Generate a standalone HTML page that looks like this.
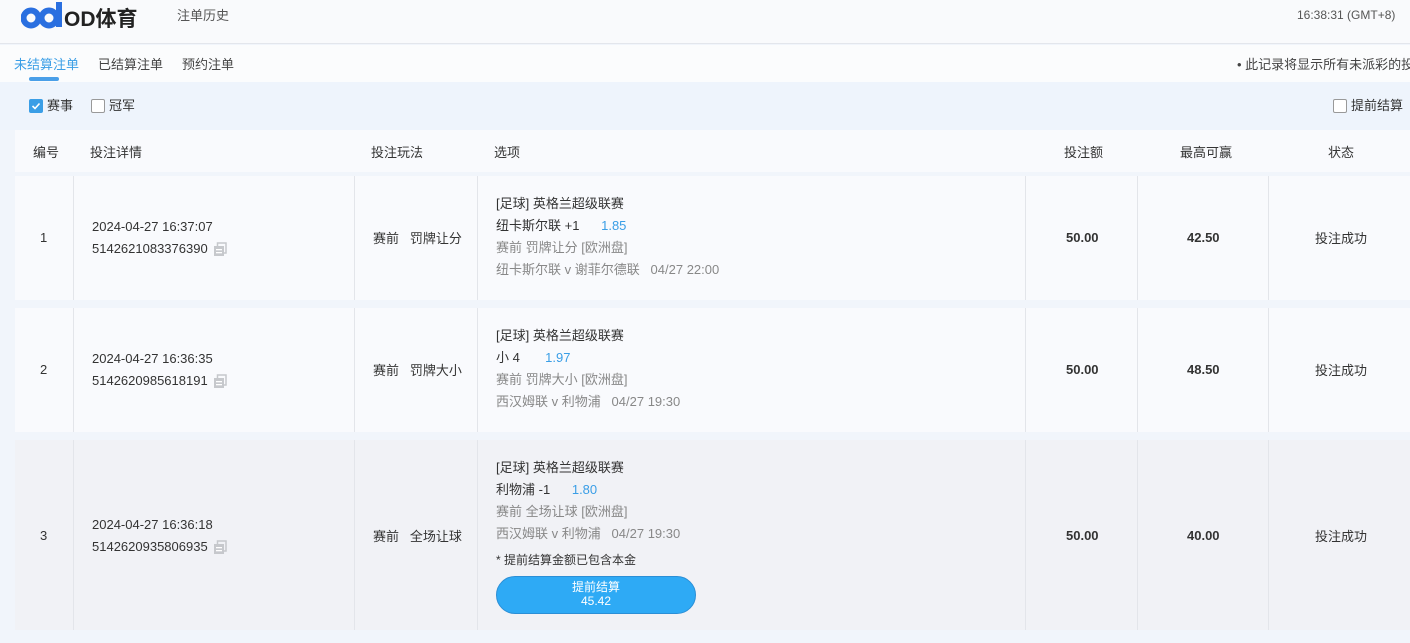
<!DOCTYPE html>
<html><head><meta charset="utf-8"><style>
*{margin:0;padding:0;box-sizing:border-box}
body{width:1410px;height:643px;overflow:hidden;background:#f1f5fb;font-family:"Liberation Sans","Noto Sans CJK SC",sans-serif;font-size:13px;color:#333;position:relative}
.a{position:absolute;white-space:nowrap}
.hdr{left:0;top:0;width:1410px;height:44px;background:#f9fafc;border-bottom:1px solid #e3e6ec}
.tabs{left:0;top:45px;width:1410px;height:37px;background:#fbfcfd}
.filt{left:0;top:82px;width:1410px;height:48px;background:#eef4fc}
.cb{display:inline-block;width:14px;height:14px;border:1px solid #999;border-radius:2px;background:#fff;vertical-align:-3px;margin-right:4px}
.row{left:15px;width:1395px;background:#f9fafd}
.vl{position:absolute;top:0;bottom:0;width:1px;background:#e3e5ea}
.g{color:#888}.b{color:#3a9ee6}
.copy{display:inline-block;width:14px;height:14px;vertical-align:-3px;margin-left:5px}
</style></head><body>
<div class="a hdr"></div>
<div class="a" style="left:21px;top:2px;">
<svg width="42" height="27" viewBox="0 0 42 27"><circle cx="10" cy="16" r="7.5" fill="none" stroke="#2a6fe0" stroke-width="6"/><circle cx="28" cy="16" r="7.5" fill="none" stroke="#2a6fe0" stroke-width="6"/><rect x="35" y="0" width="6" height="25" fill="#2a6fe0"/></svg></div>
<div class="a" style="left:64px;top:3px;font-size:21px;font-weight:bold;color:#222">OD体育</div>
<div class="a" style="left:177px;top:5px;color:#555">注单历史</div>
<div class="a" style="left:1297px;top:8px;color:#555;font-size:12px">16:38:31 (GMT+8)</div>
<div class="a tabs"></div>
<div class="a" style="left:14px;top:54px;color:#3a9ee6">未结算注单</div>
<div class="a" style="left:29px;top:77px;width:30px;height:4px;border-radius:2px;background:#4a9fe8"></div>
<div class="a" style="left:98px;top:54px;color:#444">已结算注单</div>
<div class="a" style="left:182px;top:54px;color:#444">预约注单</div>
<div class="a" style="left:1237px;top:54px;color:#444">• 此记录将显示所有未派彩的投注</div>
<div class="a filt"></div>
<div class="a" style="left:29px;top:95px"><span class="cb" style="background:#3a9ee6;border-color:#3a9ee6;position:relative"><svg width="12" height="12" style="position:absolute;left:0;top:0"><path d="M2.5 6l2.5 2.5 4.5-5" stroke="#fff" stroke-width="1.6" fill="none"/></svg></span>赛事</div>
<div class="a" style="left:91px;top:95px"><span class="cb"></span>冠军</div>
<div class="a" style="left:1333px;top:95px"><span class="cb"></span>提前结算</div>
<div class="a" style="left:15px;top:130px;width:1395px;height:42px;background:#f9fafd"></div>
<div class="a" style="left:33px;top:142px">编号</div>
<div class="a" style="left:90px;top:142px">投注详情</div>
<div class="a" style="left:371px;top:142px">投注玩法</div>
<div class="a" style="left:494px;top:142px">选项</div>
<div class="a" style="left:1064px;top:142px">投注额</div>
<div class="a" style="left:1180px;top:142px">最高可赢</div>
<div class="a" style="left:1328px;top:142px">状态</div>

<div class="a row" style="top:176px;height:124px">
<div class="vl" style="left:58px"></div><div class="vl" style="left:339px"></div><div class="vl" style="left:462px"></div><div class="vl" style="left:1010px"></div><div class="vl" style="left:1122px"></div><div class="vl" style="left:1253px"></div></div>
<div class="a row" style="top:308px;height:124px">
<div class="vl" style="left:58px"></div><div class="vl" style="left:339px"></div><div class="vl" style="left:462px"></div><div class="vl" style="left:1010px"></div><div class="vl" style="left:1122px"></div><div class="vl" style="left:1253px"></div></div>
<div class="a row" style="top:440px;height:190px;background:#f1f2f6">
<div class="vl" style="left:58px"></div><div class="vl" style="left:339px"></div><div class="vl" style="left:462px"></div><div class="vl" style="left:1010px"></div><div class="vl" style="left:1122px"></div><div class="vl" style="left:1253px"></div></div>

<!-- row 1 -->
<div class="a" style="left:40px;top:230px">1</div>
<div class="a" style="left:92px;top:216px;line-height:22px">2024-04-27 16:37:07<br>5142621083376390<span class="copy"><svg width="14" height="14"><rect x="1" y="4" width="10" height="10" fill="#c6c8cc"/><rect x="4.5" y="1" width="8.5" height="10" fill="none" stroke="#c6c8cc" stroke-width="1.5"/><rect x="3" y="7" width="6" height="1.3" fill="#fff"/><rect x="3" y="10" width="6" height="1.3" fill="#fff"/></svg></span></div>
<div class="a" style="left:373px;top:228px">赛前&nbsp;&nbsp;&nbsp;罚牌让分</div>
<div class="a" style="left:496px;top:193px;line-height:22px">[足球] 英格兰超级联赛<br>纽卡斯尔联 +1 &nbsp;&nbsp;&nbsp;&nbsp;&nbsp;<span class="b">1.85</span><br><span class="g">赛前 罚牌让分 [欧洲盘]</span><br><span class="g">纽卡斯尔联 v 谢菲尔德联&nbsp;&nbsp;&nbsp;04/27 22:00</span></div>
<div class="a" style="left:1066px;top:230px;font-weight:bold">50.00</div>
<div class="a" style="left:1187px;top:230px;font-weight:bold">42.50</div>
<div class="a" style="left:1315px;top:228px">投注成功</div>

<!-- row 2 -->
<div class="a" style="left:40px;top:362px">2</div>
<div class="a" style="left:92px;top:348px;line-height:22px">2024-04-27 16:36:35<br>5142620985618191<span class="copy"><svg width="14" height="14"><rect x="1" y="4" width="10" height="10" fill="#c6c8cc"/><rect x="4.5" y="1" width="8.5" height="10" fill="none" stroke="#c6c8cc" stroke-width="1.5"/><rect x="3" y="7" width="6" height="1.3" fill="#fff"/><rect x="3" y="10" width="6" height="1.3" fill="#fff"/></svg></span></div>
<div class="a" style="left:373px;top:360px">赛前&nbsp;&nbsp;&nbsp;罚牌大小</div>
<div class="a" style="left:496px;top:325px;line-height:22px">[足球] 英格兰超级联赛<br>小 4 &nbsp;&nbsp;&nbsp;&nbsp;&nbsp;&nbsp;<span class="b">1.97</span><br><span class="g">赛前 罚牌大小 [欧洲盘]</span><br><span class="g">西汉姆联 v 利物浦&nbsp;&nbsp;&nbsp;04/27 19:30</span></div>
<div class="a" style="left:1066px;top:362px;font-weight:bold">50.00</div>
<div class="a" style="left:1187px;top:362px;font-weight:bold">48.50</div>
<div class="a" style="left:1315px;top:360px">投注成功</div>

<!-- row 3 -->
<div class="a" style="left:40px;top:528px">3</div>
<div class="a" style="left:92px;top:514px;line-height:22px">2024-04-27 16:36:18<br>5142620935806935<span class="copy"><svg width="14" height="14"><rect x="1" y="4" width="10" height="10" fill="#c6c8cc"/><rect x="4.5" y="1" width="8.5" height="10" fill="none" stroke="#c6c8cc" stroke-width="1.5"/><rect x="3" y="7" width="6" height="1.3" fill="#fff"/><rect x="3" y="10" width="6" height="1.3" fill="#fff"/></svg></span></div>
<div class="a" style="left:373px;top:526px">赛前&nbsp;&nbsp;&nbsp;全场让球</div>
<div class="a" style="left:496px;top:457px;line-height:22px">[足球] 英格兰超级联赛<br>利物浦 -1 &nbsp;&nbsp;&nbsp;&nbsp;&nbsp;<span class="b">1.80</span><br><span class="g">赛前 全场让球 [欧洲盘]</span><br><span class="g">西汉姆联 v 利物浦&nbsp;&nbsp;&nbsp;04/27 19:30</span></div>
<div class="a" style="left:496px;top:551px;font-size:12px">* 提前结算金额已包含本金</div>
<div class="a" style="left:496px;top:576px;width:200px;height:38px;border-radius:19px;background:#2eaaf5;border:1px solid #2b8fd6;color:#fff;text-align:center;font-size:12px;line-height:14px;padding-top:3px">提前结算<br>45.42</div>
<div class="a" style="left:1066px;top:528px;font-weight:bold">50.00</div>
<div class="a" style="left:1187px;top:528px;font-weight:bold">40.00</div>
<div class="a" style="left:1315px;top:526px">投注成功</div>
</body></html>
